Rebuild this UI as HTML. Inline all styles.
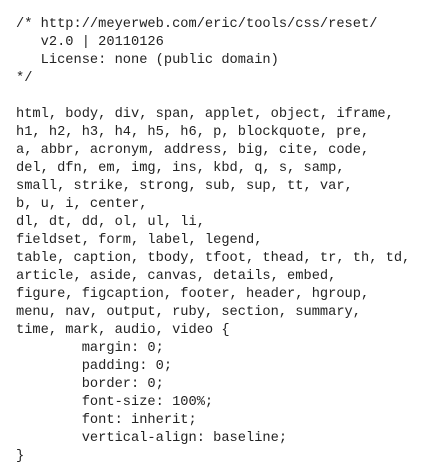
<!DOCTYPE html>
<html><head><meta charset="utf-8"><style>
html,body{margin:0;padding:0;background:#fff;width:446px;height:466px;overflow:hidden}
pre{margin:0;position:absolute;left:16px;top:16px;font-family:"Liberation Mono",monospace;font-size:13.7px;line-height:18px;color:#222;tab-size:8}
</style></head><body><pre>/* http://meyerweb.com/eric/tools/css/reset/
   v2.0 | 20110126
   License: none (public domain)
*/

html, body, div, span, applet, object, iframe,
h1, h2, h3, h4, h5, h6, p, blockquote, pre,
a, abbr, acronym, address, big, cite, code,
del, dfn, em, img, ins, kbd, q, s, samp,
small, strike, strong, sub, sup, tt, var,
b, u, i, center,
dl, dt, dd, ol, ul, li,
fieldset, form, label, legend,
table, caption, tbody, tfoot, thead, tr, th, td,
article, aside, canvas, details, embed,
figure, figcaption, footer, header, hgroup,
menu, nav, output, ruby, section, summary,
time, mark, audio, video {
        margin: 0;
        padding: 0;
        border: 0;
        font-size: 100%;
        font: inherit;
        vertical-align: baseline;
}</pre></body></html>
